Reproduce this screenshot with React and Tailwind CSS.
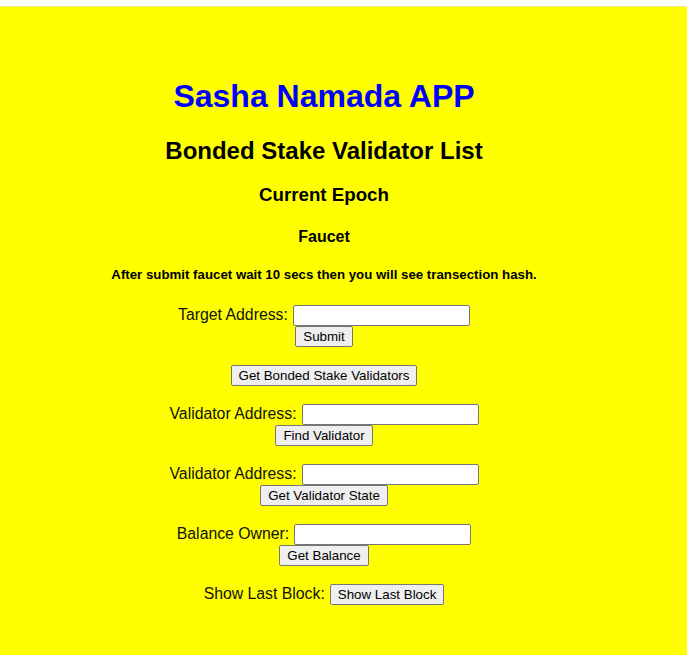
import React from "react";

const font = { fontFamily: '"Liberation Sans", Arial, sans-serif' };

function Btn({ children }) {
  return (
    <button
      type="button"
      className="h-[21px] px-[7px] text-[13.33px] leading-[15px] text-black bg-[#efefef] border border-[#767676] rounded-[2px]"
    >
      {children}
    </button>
  );
}

function Input() {
  return (
    <input
      type="text"
      className="w-[177px] h-[21px] bg-white border border-[#767676] rounded-[2px] px-[2px] text-[13.33px]"
    />
  );
}

function FormBlock({ label, button, className = "" }) {
  return (
    <div className={"flex flex-col items-center " + className}>
      <div className="flex items-center justify-center gap-[5px] h-[21px]">
        <span className="text-[15.8px] leading-[18px] pb-[2px] text-[#111]">{label}</span>
        <Input />
      </div>
      <Btn>{button}</Btn>
    </div>
  );
}

export default function App() {
  return (
    <div style={font} className="w-full">
      <div className="h-[6px] bg-white" />
      <div className="h-px bg-[#eeee80]" />
      <div className="bg-[#ffff00] min-h-[648px] pt-[71px]">
        <div className="w-[648px] text-center">
          <h1 className="m-0 text-[32px] leading-[37px] font-bold text-[#0000ff]">
            Sasha Namada APP
          </h1>
          <h2 className="mt-[22px] text-[24px] leading-[28px] font-bold text-black">
            Bonded Stake Validator List
          </h2>
          <h3 className="mt-[19px] text-[18.72px] leading-[22px] font-bold text-black">
            Current Epoch
          </h3>
          <h4 className="mt-[22px] text-[16px] leading-[18px] font-bold text-black">
            Faucet
          </h4>
          <h5 className="mt-[21px] text-[13.28px] leading-[15px] font-bold text-black">
            After submit faucet wait 10 secs then you will see transection hash.
          </h5>

          <FormBlock label="Target Address:" button="Submit" className="mt-[23px]" />

          <div className="mt-[18px] flex justify-center">
            <Btn>Get Bonded Stake Validators</Btn>
          </div>

          <FormBlock label="Validator Address:" button="Find Validator" className="mt-[18px]" />
          <FormBlock label="Validator Address:" button="Get Validator State" className="mt-[18px]" />
          <FormBlock label="Balance Owner:" button="Get Balance" className="mt-[18px]" />

          <div className="mt-[18px] flex items-center justify-center gap-[5px] h-[21px]">
            <span className="text-[15.8px] leading-[18px] pb-[2px] text-[#111]">Show Last Block:</span>
            <Btn>Show Last Block</Btn>
          </div>
        </div>
      </div>
    </div>
  );
}
